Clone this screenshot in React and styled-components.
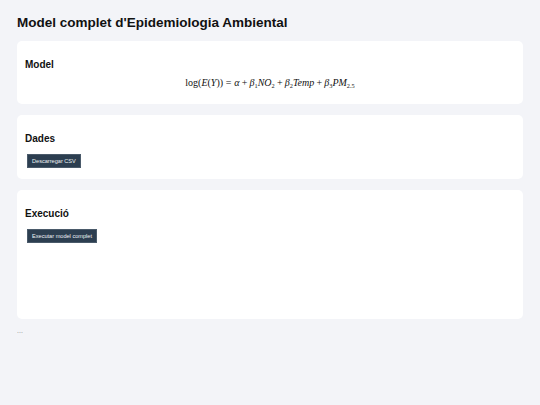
import React from "react";
import styled, { createGlobalStyle } from "styled-components";

const Global = createGlobalStyle`
  html, body { margin: 0; padding: 0; background: #f3f4f8; }
  body { font-family: "Liberation Sans", Arial, sans-serif; color: #111; }
`;

const Page = styled.div`
  padding: 14px 17px 20px;
  display: flex;
  flex-direction: column;
`;

const Title = styled.h1`
  font-size: 13.5px;
  font-weight: 700;
  margin: 0 0 9px;
  line-height: 18px;
`;

const Card = styled.section`
  background: #ffffff;
  border-radius: 5px;
  padding: 18px 8px 11px;
  margin-bottom: 11px;
  min-height: ${(p) => p.$min || 0}px;
  box-sizing: border-box;
  display: flex;
  flex-direction: column;
  align-items: flex-start;
`;

const Heading = styled.h2`
  font-size: 10px;
  font-weight: 700;
  margin: 0 0 ${(p) => p.$gap || 8}px;
  line-height: 12px;
`;

const Formula = styled.div`
  align-self: stretch;
  text-align: center;
  font-family: "Liberation Serif", "Times New Roman", serif;
  font-size: 10px;
  line-height: 12px;
  color: #111;
  i { font-style: italic; }
  sub { font-size: 6.3px; vertical-align: -1.5px; font-style: normal; line-height: 0; }
`;

const Rel = styled.span`
  padding: 0 ${(p) => p.$w}em;
`;

const Button = styled.button`
  display: block;
  background: #2c3e50;
  color: #eef2f6;
  border: 1px solid #4a5a6a;
  font-family: "Liberation Sans", Arial, sans-serif;
  font-size: 5.6px;
  padding: 0 4px;
  height: 14px;
  margin-left: 2px;
  cursor: pointer;
`;

const Dots = styled.div`
  font-size: 7px;
  line-height: 8px;
  color: #888;
  margin-top: -3px;
`;

export default function App() {
  return (
    <>
      <Global />
      <Page>
        <Title>Model complet d'Epidemiologia Ambiental</Title>
        <Card $min={63}>
          <Heading $gap={6}>Model</Heading>
          <Formula>
            log(<i>E</i>(<i>Y</i>))<Rel $w={0.28}>=</Rel><i>α</i><Rel $w={0.22}>+</Rel><i>β</i><sub>1</sub><i>NO</i><sub>2</sub><Rel $w={0.22}>+</Rel><i>β</i><sub>2</sub><i>Temp</i><Rel $w={0.22}>+</Rel><i>β</i><sub>3</sub><i>PM</i><sub>2.5</sub>
          </Formula>
        </Card>
        <Card $min={64}>
          <Heading $gap={9}>Dades</Heading>
          <Button>Descarregar CSV</Button>
        </Card>
        <Card $min={129}>
          <Heading $gap={9}>Execució</Heading>
          <Button>Executar model complet</Button>
        </Card>
        <Dots>...</Dots>
      </Page>
    </>
  );
}
